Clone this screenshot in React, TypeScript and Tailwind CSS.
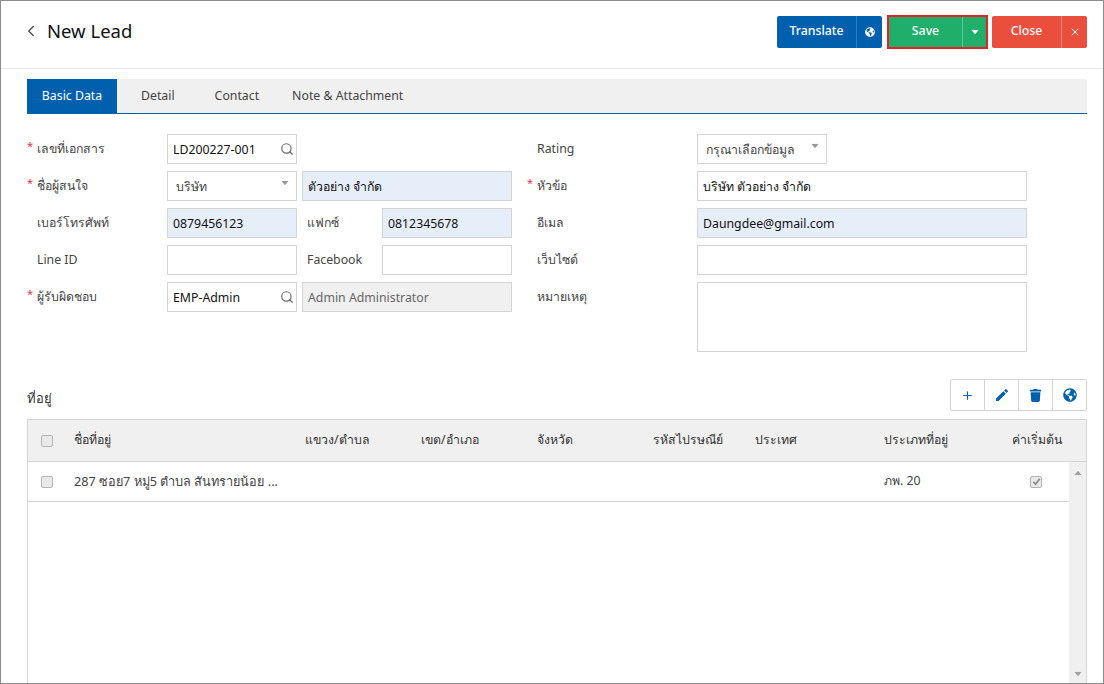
import { ChevronLeft, Plus, Search, X } from 'lucide-react'
import { FaGlobeAmericas, FaTrash } from 'react-icons/fa'
import { MdEdit } from 'react-icons/md'

const font = "font-['Noto_Sans','DejaVu_Sans',sans-serif]"

function Caret({ className }: { className: string }) {
  return (
    <svg className={className} width="10" height="6" viewBox="0 0 10 6">
      <path d="M0 0h10L5 6z" fill="currentColor" />
    </svg>
  )
}

function Label({ text, required, width }: { text: string, required?: boolean, width: string }) {
  return (
    <div className={`${width} shrink-0 flex text-[12.3px] text-[#444] leading-[29px] h-[30px]`}>
      <span className="w-[10px] text-[#f0304a] text-[11px] leading-[24px]">{required ? '*' : ''}</span>
      <span>{text}</span>
    </div>
  )
}

function Field({ value, width, tone = 'white', search }: { value?: string, width: string, tone?: 'white' | 'blue' | 'gray', search?: boolean }) {
  const bg = tone === 'blue' ? 'bg-[#e6eefa]' : tone === 'gray' ? 'bg-[#f0f0f0]' : 'bg-white'
  const fg = tone === 'gray' ? 'text-[#666]' : 'text-[#111]'
  return (
    <div className={`${width} ${bg} ${fg} h-[30px] shrink-0 border border-[#d4d4d4] flex items-center justify-between pl-[5px] pr-[2px] text-[12.3px]`}>
      <span className="pt-[2px]">{value}</span>
      {search && <Search size={14} className="text-[#666]" />}
    </div>
  )
}

function SelectBox({ value, width }: { value: string, width: string }) {
  return (
    <div className={`${width} h-[30px] shrink-0 bg-white border border-[#d4d4d4] flex items-center justify-between pl-[8px] pr-[6px] text-[12.3px] text-[#444]`}>
      <span className="mt-[2px]">{value}</span>
      <Caret className="text-[#999] mb-[6px] scale-75" />
    </div>
  )
}

const columns = ['แขวง/ตำบล', 'เขต/อำเภอ', 'จังหวัด', 'รหัสไปรษณีย์', 'ประเทศ', 'ประเภทที่อยู่', 'ค่าเริ่มต้น']
const grid = 'grid grid-cols-[46px_231px_116px_116px_116px_102px_129px_128px_1fr] items-center'

function Check({ checked }: { checked?: boolean }) {
  return (
    <div className="w-[12px] h-[12px] rounded-[2px] border border-[#b5b5b5] bg-[#e9e9e9] flex items-center justify-center">
      {checked && (
        <svg width="9" height="9" viewBox="0 0 10 10">
          <path d="M1.5 5.5L4 8l4.5-6" fill="none" stroke="#8c8c8c" strokeWidth="2" />
        </svg>
      )}
    </div>
  )
}

export default function App() {
  return (
    <div className={`${font} w-[1104px] h-[684px] overflow-hidden bg-white border border-[#8c8c8c] flex flex-col`}>
      {/* Header */}
      <div className="h-[68px] shrink-0 border-b border-[#e5e5e5] flex items-center justify-between pl-[21px] pr-[16px] pb-[6px]">
        <div className="flex items-center gap-[7px] mb-[2px]">
          <ChevronLeft size={18} className="text-[#555]" />
          <span className="text-[18.5px] text-[#111]">New Lead</span>
        </div>
        <div className="flex items-center">
          <div className="flex h-[32px] w-[105px] rounded-[2px] bg-[#0060ae] text-white text-[12.3px]">
            <div className="w-[79px] flex items-center justify-center font-medium">Translate</div>
            <div className="flex-1 border-l border-[#2a7cc4] flex items-center justify-center">
              <FaGlobeAmericas size={10} />
            </div>
          </div>
          <div className="ml-[5px] flex h-[34px] w-[101px] border-2 border-[#e8202a] bg-[#20ae6b] text-white text-[12.3px]">
            <div className="w-[73px] flex items-center justify-center font-medium">Save</div>
            <div className="flex-1 border-l border-[#4fd08f] flex items-center justify-center">
              <Caret className="scale-75" />
            </div>
          </div>
          <div className="ml-[4px] flex h-[32px] w-[95px] rounded-[2px] bg-[#ea4e3d] text-white text-[12.3px]">
            <div className="w-[69px] flex items-center justify-center font-medium">Close</div>
            <div className="flex-1 border-l border-[#f08a7e] flex items-center justify-center">
              <X size={12} />
            </div>
          </div>
        </div>
      </div>

      {/* Tabs */}
      <div className="mt-[10px] ml-[26px] mr-[16px] h-[35px] shrink-0 flex items-center bg-[#f0f0f0] border-b border-[#0060ae] text-[12.3px] text-[#444]">
        <div className="w-[90px] h-full bg-[#0060ae] text-white flex items-center justify-center">Basic Data</div>
        <div className="ml-[24px]">Detail</div>
        <div className="ml-[40px]">Contact</div>
        <div className="ml-[33px]">Note &amp; Attachment</div>
      </div>

      {/* Form */}
      <div className="mt-[20px] ml-[26px] flex h-[236px] shrink-0">
        <div className="w-[485px] flex flex-col gap-[7px]">
          <div className="flex">
            <Label text="เลขที่เอกสาร" required width="w-[140px]" />
            <Field value="LD200227-001" width="w-[130px]" search />
          </div>
          <div className="flex">
            <Label text="ชื่อผู้สนใจ" required width="w-[140px]" />
            <SelectBox value="บริษัท" width="w-[130px]" />
            <div className="ml-[5px]"><Field value="ตัวอย่าง จำกัด" width="w-[210px]" tone="blue" /></div>
          </div>
          <div className="flex">
            <Label text="เบอร์โทรศัพท์" width="w-[140px]" />
            <Field value="0879456123" width="w-[130px]" tone="blue" />
            <div className="w-[85px] pl-[10px] text-[12.3px] text-[#444] leading-[29px]">แฟกซ์</div>
            <Field value="0812345678" width="w-[130px]" tone="blue" />
          </div>
          <div className="flex">
            <Label text="Line ID" width="w-[140px]" />
            <Field width="w-[130px]" />
            <div className="w-[85px] pl-[10px] text-[12.3px] text-[#444] leading-[29px]">Facebook</div>
            <Field width="w-[130px]" />
          </div>
          <div className="flex">
            <Label text="ผู้รับผิดชอบ" required width="w-[140px]" />
            <Field value="EMP-Admin" width="w-[130px]" search />
            <div className="ml-[5px]"><Field value="Admin Administrator" width="w-[210px]" tone="gray" /></div>
          </div>
        </div>
        <div className="ml-[15px] flex flex-col gap-[7px]">
          <div className="flex">
            <Label text="Rating" width="w-[170px]" />
            <SelectBox value="กรุณาเลือกข้อมูล" width="w-[130px]" />
          </div>
          <div className="flex">
            <Label text="หัวข้อ" required width="w-[170px]" />
            <Field value="บริษัท ตัวอย่าง จำกัด" width="w-[330px]" />
          </div>
          <div className="flex">
            <Label text="อีเมล" width="w-[170px]" />
            <Field value="Daungdee@gmail.com" width="w-[330px]" tone="blue" />
          </div>
          <div className="flex">
            <Label text="เว็บไซต์" width="w-[170px]" />
            <Field width="w-[330px]" />
          </div>
          <div className="flex">
            <Label text="หมายเหตุ" width="w-[170px]" />
            <div className="w-[330px] h-[70px] border border-[#d4d4d4] bg-white" />
          </div>
        </div>
      </div>

      {/* Address toolbar */}
      <div className="mt-[9px] ml-[26px] mr-[16px] h-[32px] shrink-0 flex items-center justify-between">
        <span className="mt-[7px] text-[13px] font-medium text-[#333]">ที่อยู่</span>
        <div className="flex h-[32px] border border-[#d4d4d4] rounded-[2px] text-[#0060ae] divide-x divide-[#d4d4d4]">
          <div className="w-[34px] flex items-center justify-center"><Plus size={13} /></div>
          <div className="w-[34px] flex items-center justify-center"><MdEdit size={16} /></div>
          <div className="w-[34px] flex items-center justify-center"><FaTrash size={13} /></div>
          <div className="w-[33px] flex items-center justify-center"><FaGlobeAmericas size={14} /></div>
        </div>
      </div>

      {/* Table */}
      <div className="mt-[8px] ml-[26px] mr-[16px] flex-1 min-h-0 border border-[#d4d4d4] border-b-0 flex flex-col">
        <div className={`${grid} h-[42px] shrink-0 bg-[#f0f0f0] border-b border-[#d4d4d4] text-[12.3px] text-[#333]`}>
          <div className="pl-[13px]"><Check /></div>
          <div>ชื่อที่อยู่</div>
          {columns.map((c) => (
            <div key={c}>{c}</div>
          ))}
        </div>
        <div className="flex flex-1 min-h-0">
          <div className="flex-1">
            <div className={`${grid} h-[40px] border-b border-[#d4d4d4] text-[12.3px] text-[#444]`}>
              <div className="pl-[13px]"><Check /></div>
              <div className="whitespace-nowrap text-[12.7px]">287 ซอย7 หมู่5 ตำบล สันทรายน้อย ...</div>
              <div /><div /><div /><div /><div />
              <div>ภพ. 20</div>
              <div className="pl-[18px]"><Check checked /></div>
            </div>
          </div>
          <div className="w-[17px] bg-[#f0f0f0] flex flex-col items-center justify-between pt-[8px] pb-[6px] text-[#a0a0a0]">
            <Caret className="rotate-180 scale-75" />
            <Caret className="scale-75" />
          </div>
        </div>
      </div>
    </div>
  )
}
